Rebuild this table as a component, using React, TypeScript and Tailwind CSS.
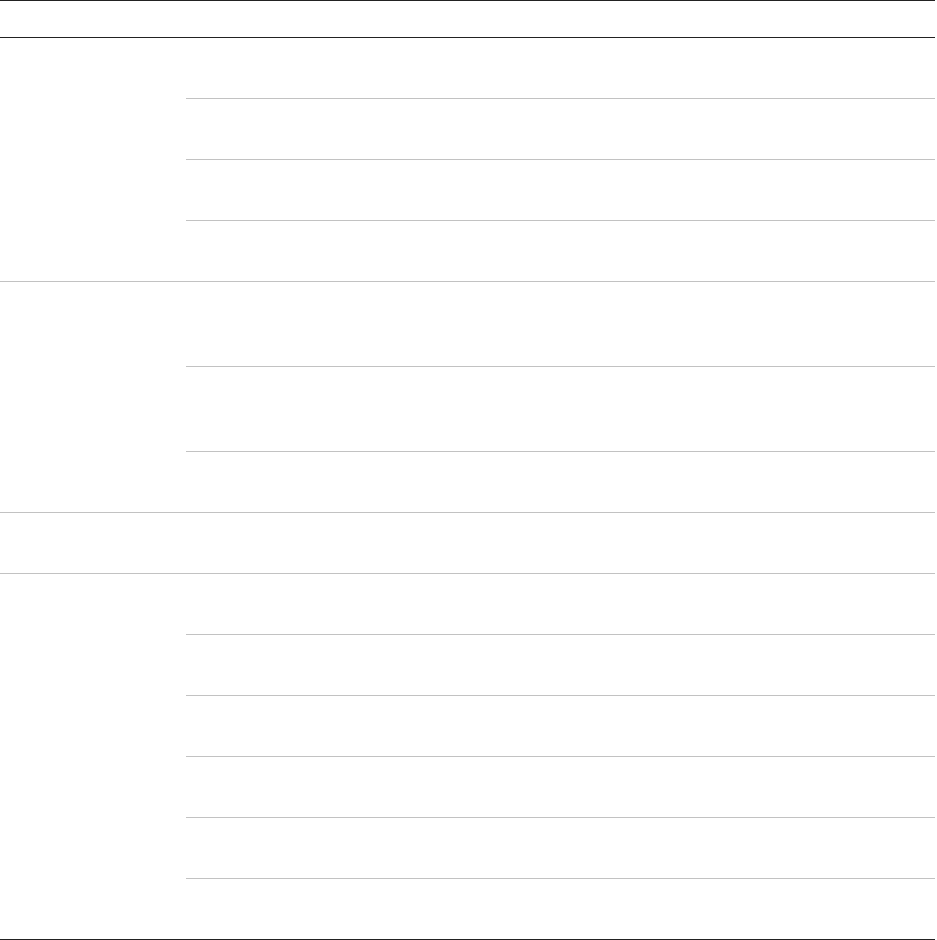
// row pitch including its 1px bottom rule
const groups: number[][] = [
  [61, 61, 61, 61],
  [85, 85, 61],
  [61],
  [61, 61, 61, 61, 61, 61],
];

export default function App() {
  return (
    <div className="min-h-screen bg-white font-['Liberation_Sans',sans-serif] text-sm text-[#222]">
      <div className="w-[935px] border-t border-[#222]">
        {/* Header */}
        <div className="flex h-[37px] border-b border-[#222]">
          <div className="w-[186px]" />
          <div className="flex-1" />
        </div>

        {groups.map((rows, gi) => (
          <div
            key={gi}
            className={
              gi === groups.length - 1
                ? "flex border-b border-[#222]"
                : "flex border-b border-[#c2c2c2]"
            }
          >
            <div className="w-[186px] shrink-0" />
            <div className="flex flex-1 flex-col">
              {rows.map((h, ri) => {
                const last = ri === rows.length - 1;
                return (
                  <div
                    key={ri}
                    style={{ height: last ? h - 1 : h }}
                    className={last ? "" : "border-b border-[#c2c2c2]"}
                  />
                );
              })}
            </div>
          </div>
        ))}
      </div>
    </div>
  );
}
